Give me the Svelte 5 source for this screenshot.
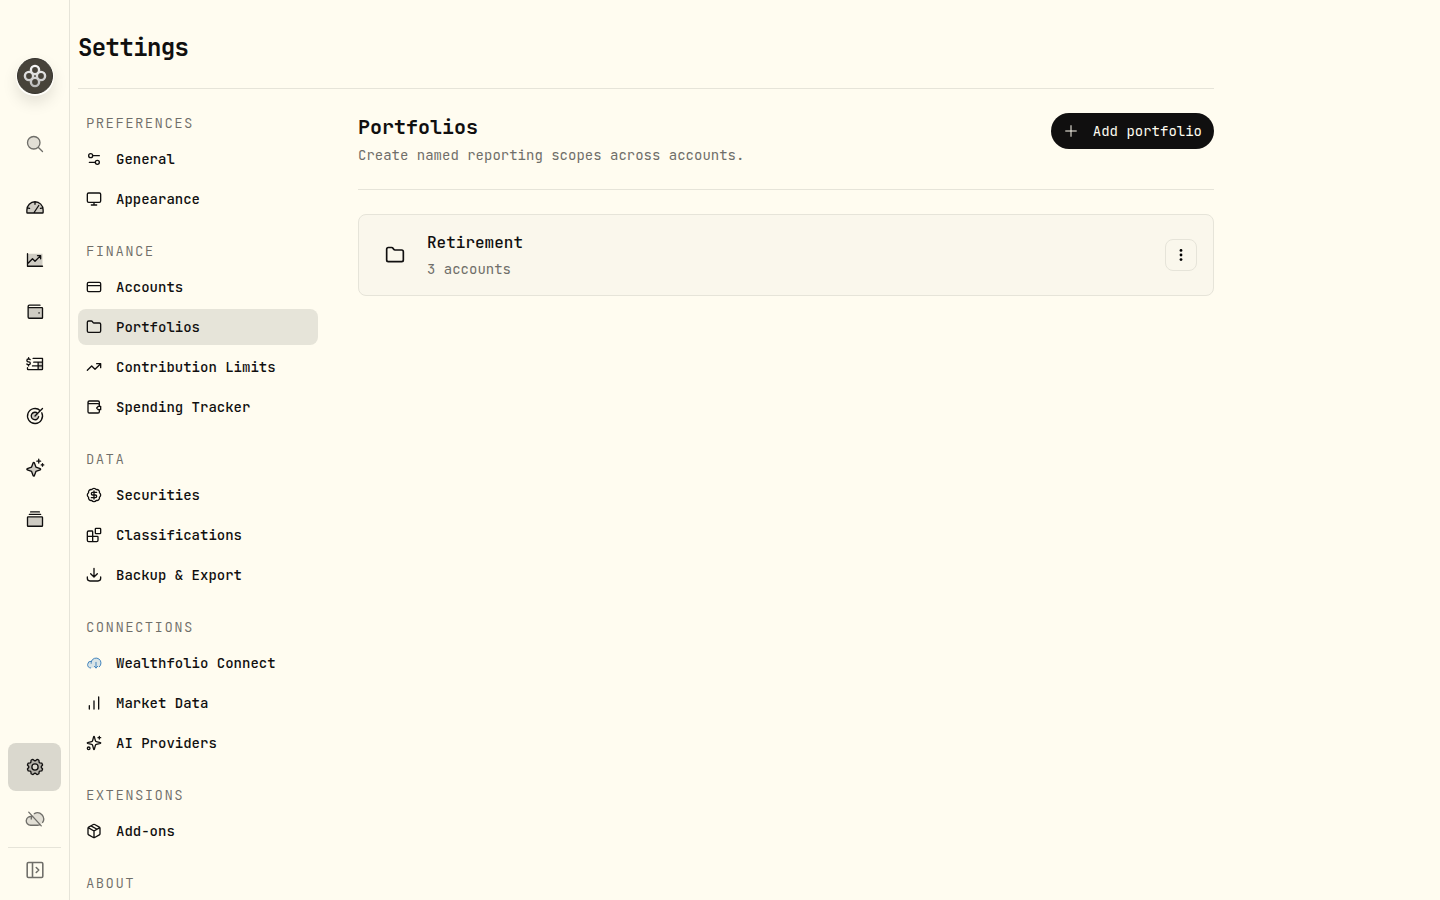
<script lang="ts">
  interface NavItem {
    label: string;
    icon: string;
  }

  interface NavGroup {
    title: string;
    items: NavItem[];
  }

  interface Portfolio {
    id: number;
    name: string;
    accounts: number;
  }

  // `fill` is the tinted layer, `line` the outline drawn over it (256 grid).
  const railIcons: Record<string, { fill?: string; line: string }> = {
    search: {
      fill: 'M192 112a80 80 0 1 1-160 0a80 80 0 1 1 160 0Z',
      line: 'M192 112a80 80 0 1 1-160 0a80 80 0 1 1 160 0ZM168.6 168.6 224 224',
    },
    dashboard: {
      fill: 'M24 192V153a104 104 0 0 1 208-1v40Z',
      line: 'M24 184V153C24 95.6 70.2 48.2 127.6 48A104 104 0 0 1 232 152v32a8 8 0 0 1-8 8H32a8 8 0 0 1-8-8ZM112 192l64-96M128 48v32M27.5 125.1l30.9 8.3M228.5 125.1l-30.9 8.3',
    },
    performance: {
      fill: 'M32 48H224V208H32Z',
      line: 'M224 208H32V48M200 72l-72 72-32-32-64 64M200 112V72H160',
    },
    accounts: {
      fill: 'M40 56a16 16 0 0 0 16 16H216a8 8 0 0 1 8 8V200a8 8 0 0 1-8 8H56a16 16 0 0 1-16-16Z',
      line: 'M40 56V192a16 16 0 0 0 16 16H216a8 8 0 0 0 8-8V80a8 8 0 0 0-8-8H56A16 16 0 0 1 40 56h0A16 16 0 0 1 56 40H192M178 140h4',
    },
    activity: {
      fill: 'M168 104h56v88h-56Z',
      line: 'M104 56H224V192a8 8 0 0 1-8 8H40a8 8 0 0 1-8-8V176M112 104H224M96 152H224M168 104v96M24 128a20 20 0 0 0 16 8h10a18 18 0 0 0 0-36h-8a18 18 0 0 1 0-36h8a20 20 0 0 1 16 8M46 64V48M46 152V136',
    },
    goals: {
      fill: 'M176 128a48 48 0 1 1-96 0a48 48 0 1 1 96 0Z',
      line: 'M128 128 224 32M195.9 60.1a96 96 0 1 0 18.8 26.5M161.9 94.1a48 48 0 1 0 13.1 43.4',
    },
    assistant: {
      fill: 'M194.8 151.4l-55.1 20.3-20.3 55.1a7.9 7.9 0 0 1-14.8 0l-20.3-55.1-55.1-20.3a7.9 7.9 0 0 1 0-14.8l55.1-20.3 20.3-55.1a7.9 7.9 0 0 1 14.8 0l20.3 55.1 55.1 20.3a7.9 7.9 0 0 1 0 14.8Z',
      line: 'M194.8 151.4l-55.1 20.3-20.3 55.1a7.9 7.9 0 0 1-14.8 0l-20.3-55.1-55.1-20.3a7.9 7.9 0 0 1 0-14.8l55.1-20.3 20.3-55.1a7.9 7.9 0 0 1 14.8 0l20.3 55.1 55.1 20.3a7.9 7.9 0 0 1 0 14.8ZM176 16v48M200 40H152M224 72v32M240 88H208',
    },
    holdings: {
      fill: 'M32 88H224V208H32Z',
      line: 'M40 88H216a8 8 0 0 1 8 8V200a8 8 0 0 1-8 8H40a8 8 0 0 1-8-8V96a8 8 0 0 1 8-8ZM56 56H200M72 24H184',
    },
    settings: {
      fill: 'M207.9 123.2l16.8-21a99.1 99.1 0 0 0-10.1-24.3l-26.7-3a81 81 0 0 0-6.8-6.8l-3-26.7a99.4 99.4 0 0 0-24.3-10l-21 16.8a81.6 81.6 0 0 0-9.6 0l-21-16.8A99.1 99.1 0 0 0 77.9 41.4l-3 26.7a81 81 0 0 0-6.8 6.8l-26.7 3a99.4 99.4 0 0 0-10 24.3l16.8 21a81.6 81.6 0 0 0 0 9.6l-16.8 21a99.1 99.1 0 0 0 10.1 24.3l26.7 3a81 81 0 0 0 6.8 6.8l3 26.7a99.4 99.4 0 0 0 24.3 10l21-16.8a81.6 81.6 0 0 0 9.6 0l21 16.8a99.1 99.1 0 0 0 24.3-10.1l3-26.7a81 81 0 0 0 6.8-6.8l26.7-3a99.4 99.4 0 0 0 10-24.3l-16.8-21A81.6 81.6 0 0 0 207.9 123.2ZM128 168a40 40 0 1 1 40-40A40 40 0 0 1 128 168Z',
      line: 'M168 128a40 40 0 1 1-80 0a40 40 0 1 1 80 0ZM207.9 123.2l16.8-21a99.1 99.1 0 0 0-10.1-24.3l-26.7-3a81 81 0 0 0-6.8-6.8l-3-26.7a99.4 99.4 0 0 0-24.3-10l-21 16.8a81.6 81.6 0 0 0-9.6 0l-21-16.8A99.1 99.1 0 0 0 77.9 41.4l-3 26.7a81 81 0 0 0-6.8 6.8l-26.7 3a99.4 99.4 0 0 0-10 24.3l16.8 21a81.6 81.6 0 0 0 0 9.6l-16.8 21a99.1 99.1 0 0 0 10.1 24.3l26.7 3a81 81 0 0 0 6.8 6.8l3 26.7a99.4 99.4 0 0 0 24.3 10l21-16.8a81.6 81.6 0 0 0 9.6 0l21 16.8a99.1 99.1 0 0 0 24.3-10.1l3-26.7a81 81 0 0 0 6.8-6.8l26.7-3a99.4 99.4 0 0 0 10-24.3l-16.8-21A81.6 81.6 0 0 0 207.9 123.2Z',
    },
    cloudOff: {
      fill: 'M160 48a80 80 0 0 0-74 50A56 56 0 1 0 72 208h88a80 80 0 0 0 0-160Z',
      line: 'M48 40 208 216M80 128a80 80 0 0 1 5.5-29.1M120 59a80 80 0 0 1 106 113M186 203a80 80 0 0 1-26 5H72A56 56 0 1 1 85.9 97.7',
    },
    expand: {
      line: 'M44 32H212a16 16 0 0 1 16 16V208a16 16 0 0 1-16 16H44a16 16 0 0 1-16-16V48a16 16 0 0 1 16-16ZM96 32V224M144 96l32 32-32 32',
    },
  };

  const icons: Record<string, string> = {
    sliders: 'M20 7h-9M14 17H5M20 17a3 3 0 1 1-6 0a3 3 0 1 1 6 0ZM10 7a3 3 0 1 1-6 0a3 3 0 1 1 6 0Z',
    monitor: 'M4 3h16a2 2 0 0 1 2 2v10a2 2 0 0 1-2 2H4a2 2 0 0 1-2-2V5a2 2 0 0 1 2-2ZM8 21h8M12 17v4',
    card: 'M4 5h16a2 2 0 0 1 2 2v10a2 2 0 0 1-2 2H4a2 2 0 0 1-2-2V7a2 2 0 0 1 2-2ZM2 10h20',
    folder: 'M20 20a2 2 0 0 0 2-2V8a2 2 0 0 0-2-2h-7.9a2 2 0 0 1-1.69-.9L9.6 3.9A2 2 0 0 0 7.93 3H4a2 2 0 0 0-2 2v13a2 2 0 0 0 2 2Z',
    trending: 'M22 7l-8.5 8.5-5-5L2 17M16 7h6v6',
    wallet: 'M20 9V5a2 2 0 0 0-2-2H5a2 2 0 0 0 0 4h13a2 2 0 0 1 2 2v1.5M3 5v14a2 2 0 0 0 2 2h13a2 2 0 0 0 2-2v-2.5M22 11h-3.5L16 13.5l2.5 2.5H22Z',
    badge: 'M3.85 8.62a4 4 0 0 1 4.78-4.77 4 4 0 0 1 6.74 0 4 4 0 0 1 4.78 4.78 4 4 0 0 1 0 6.74 4 4 0 0 1-4.77 4.78 4 4 0 0 1-6.75 0 4 4 0 0 1-4.78-4.77 4 4 0 0 1 0-6.76ZM16 8h-6a2 2 0 1 0 0 4h4a2 2 0 1 1 0 4H8M12 18V6',
    blocks: 'M15 2h6a1 1 0 0 1 1 1v6a1 1 0 0 1-1 1h-6a1 1 0 0 1-1-1V3a1 1 0 0 1 1-1ZM10 22V7a1 1 0 0 0-1-1H4a2 2 0 0 0-2 2v12a2 2 0 0 0 2 2h12a2 2 0 0 0 2-2v-5a1 1 0 0 0-1-1H2',
    download: 'M12 2v12M7 10l5 5 5-5M2 15v2a4 4 0 0 0 4 4h12a4 4 0 0 0 4-4v-2',
    bars: 'M5 21v-5M12 21V9M19 21V3',
    sparkles: 'M9.94 15.5A2 2 0 0 0 8.5 14.06l-6.14-1.58a.5.5 0 0 1 0-.96L8.5 9.94A2 2 0 0 0 9.94 8.5l1.58-6.14a.5.5 0 0 1 .96 0L14.06 8.5A2 2 0 0 0 15.5 9.94l6.14 1.58a.5.5 0 0 1 0 .96L15.5 14.06a2 2 0 0 0-1.44 1.44l-1.58 6.14a.5.5 0 0 1-.96 0ZM20 2v4M22 4h-4M6 20a2 2 0 1 1-4 0a2 2 0 1 1 4 0Z',
    package: 'M11 21.73a2 2 0 0 0 2 0l7-4A2 2 0 0 0 21 16V8a2 2 0 0 0-1-1.73l-7-4a2 2 0 0 0-2 0l-7 4A2 2 0 0 0 3 8v8a2 2 0 0 0 1 1.73ZM12 22V12M3.3 7l8.7 5 8.7-5M7.5 4.27l9 5.15',
    plus: 'M4 12h16M12 4v16',
  };

  const railItems: NavItem[] = [
    { label: 'Dashboard', icon: 'dashboard' },
    { label: 'Performance', icon: 'performance' },
    { label: 'Accounts', icon: 'accounts' },
    { label: 'Activities', icon: 'activity' },
    { label: 'Goals', icon: 'goals' },
    { label: 'Assistant', icon: 'assistant' },
    { label: 'Holdings', icon: 'holdings' },
  ];

  const groups: NavGroup[] = [
    {
      title: 'Preferences',
      items: [
        { label: 'General', icon: 'sliders' },
        { label: 'Appearance', icon: 'monitor' },
      ],
    },
    {
      title: 'Finance',
      items: [
        { label: 'Accounts', icon: 'card' },
        { label: 'Portfolios', icon: 'folder' },
        { label: 'Contribution Limits', icon: 'trending' },
        { label: 'Spending Tracker', icon: 'wallet' },
      ],
    },
    {
      title: 'Data',
      items: [
        { label: 'Securities', icon: 'badge' },
        { label: 'Classifications', icon: 'blocks' },
        { label: 'Backup & Export', icon: 'download' },
      ],
    },
    {
      title: 'Connections',
      items: [
        { label: 'Wealthfolio Connect', icon: 'cloud' },
        { label: 'Market Data', icon: 'bars' },
        { label: 'AI Providers', icon: 'sparkles' },
      ],
    },
    { title: 'Extensions', items: [{ label: 'Add-ons', icon: 'package' }] },
    { title: 'About', items: [] },
  ];

  const portfolios: Portfolio[] = [{ id: 1, name: 'Retirement', accounts: 3 }];

  let current = $state('Portfolios');

  function select(e: MouseEvent, label: string) {
    e.preventDefault();
    current = label;
  }
</script>

{#snippet railIcon(name: string)}
  <svg class="rail-icon" viewBox="0 0 256 256" aria-hidden="true">
    {#if railIcons[name].fill}
      <path class="tint" d={railIcons[name].fill} />
    {/if}
    <path class="outline" d={railIcons[name].line} />
  </svg>
{/snippet}

{#snippet icon(name: string)}
  {#if name === 'cloud'}
    <svg class="icon cloud" viewBox="0 0 24 24" aria-hidden="true">
      <path class="cloud-body" d="M7 19.5A5 5 0 1 1 8.1 9.4A7.5 7.5 0 1 1 20 17.8" />
      <path d="M7.7 12.5a7 7 0 0 1 .6-3.2M15 11v8.5M12.5 17l2.5 2.5 2.5-2.5" />
    </svg>
  {:else}
    <svg class="icon" viewBox="0 0 24 24" aria-hidden="true"><path d={icons[name]} /></svg>
  {/if}
{/snippet}

<div class="shell">
  <aside class="rail">
    <a class="logo" href="#home" aria-label="Home">
      <svg viewBox="0 0 36 36" aria-hidden="true">
        <defs>
          <linearGradient id="petal" x1="0" y1="7" x2="0" y2="29" gradientUnits="userSpaceOnUse">
            <stop offset="0" stop-color="#fafafa" />
            <stop offset="1" stop-color="#b8b8b8" />
          </linearGradient>
        </defs>
        <circle cx="18" cy="18" r="17.5" fill="#47433a" stroke="#35332e" />
        <g fill="none" stroke="url(#petal)" stroke-width="2.4">
          <circle cx="18" cy="12" r="4.1" />
          <circle cx="12" cy="18" r="4.1" />
          <circle cx="24" cy="18" r="4.1" />
          <circle cx="18" cy="24" r="4.1" />
        </g>
      </svg>
    </a>
    <button type="button" class="rail-item muted search" aria-label="Search">{@render railIcon('search')}</button>

    <nav class="rail-nav" aria-label="Main">
      {#each railItems as item (item.label)}
        <a class="rail-item" href="#{item.icon}" aria-label={item.label}>{@render railIcon(item.icon)}</a>
      {/each}
    </nav>

    <div class="rail-nav bottom">
      <a class="rail-item active" href="#settings" aria-label="Settings">{@render railIcon('settings')}</a>
      <button type="button" class="rail-item muted" aria-label="Sync is off">{@render railIcon('cloudOff')}</button>
    </div>
    <div class="rail-toggle">
      <button type="button" class="rail-item muted" aria-label="Expand sidebar">{@render railIcon('expand')}</button>
    </div>
  </aside>

  <main class="page">
    <header class="page-header">
      <h1>Settings</h1>
    </header>

    <div class="columns">
      <nav class="settings-nav" aria-label="Settings sections">
        {#each groups as group (group.title)}
          <section>
            <h2 class="group-title">{group.title}</h2>
            {#if group.items.length > 0}
              <ul>
                {#each group.items as item (item.label)}
                  <li>
                    <a
                      href="#{item.icon}"
                      class="nav-link"
                      class:active={item.label === current}
                      aria-current={item.label === current ? 'page' : undefined}
                      onclick={(e) => select(e, item.label)}
                    >
                      {@render icon(item.icon)}
                      <span>{item.label}</span>
                    </a>
                  </li>
                {/each}
              </ul>
            {/if}
          </section>
        {/each}
      </nav>

      <div class="content">
        <div class="content-header">
          <div>
            <h2>Portfolios</h2>
            <p>Create named reporting scopes across accounts.</p>
          </div>
          <button type="button" class="add-button">
            {@render icon('plus')}
            <span>Add portfolio</span>
          </button>
        </div>

        {#each portfolios as portfolio (portfolio.id)}
          <article class="card">
            <div class="card-icon">{@render icon('folder')}</div>
            <div class="card-text">
              <h3>{portfolio.name}</h3>
              <p>{portfolio.accounts} accounts</p>
            </div>
            <button type="button" class="menu-button" aria-label="Open menu for {portfolio.name}">
              <svg viewBox="0 0 16 16" width="16" height="16" aria-hidden="true">
                <circle cx="8" cy="3.4" r="1.4" />
                <circle cx="8" cy="8" r="1.4" />
                <circle cx="8" cy="12.6" r="1.4" />
              </svg>
            </button>
          </article>
        {/each}
      </div>
    </div>
  </main>
</div>

<style>
  :global(body) {
    background: #fffcf0;
  }

  .shell {
    --text: #100f0f;
    --muted: #6f6e69;
    --border: #e6e4d9;
    --card: #faf7ec;
    display: flex;
    min-height: 100vh;
    background: #fffcf0;
    color: var(--text);
    font-family: 'JetBrains Mono', 'DejaVu Sans Mono', 'Liberation Mono', monospace;
    font-size: 14px;
    line-height: 20px;
  }

  h1, h2, h3, p, ul { margin: 0; padding: 0; }
  ul { list-style: none; }
  a { color: inherit; text-decoration: none; }
  button {
    border: 0;
    background: none;
    color: inherit;
    font: inherit;
    cursor: pointer;
  }

  .rail {
    position: sticky;
    top: 0;
    display: flex;
    flex-direction: column;
    flex-shrink: 0;
    box-sizing: border-box;
    width: 70px;
    height: 100vh;
    padding: 58px 8px 8px;
    border-right: 1px solid var(--border);
  }
  .logo {
    align-self: center;
    width: 36px;
    height: 36px;
    border-radius: 50%;
    box-shadow: 0 1px 0 1px #fffefa, 0 8px 16px rgba(16, 15, 15, 0.12);
  }
  .logo svg { display: block; }
  .rail-item {
    display: flex;
    align-items: center;
    justify-content: center;
    width: 100%;
    height: 48px;
    padding: 0;
    border-radius: 8px;
  }
  .rail-item:hover { background: var(--border); }
  .rail-item.active { background: #dad8ce; }
  .rail-item.muted { color: var(--muted); }
  .rail-item.search { margin: 26px 0 16px; }
  .rail-nav {
    display: flex;
    flex-direction: column;
    gap: 4px;
  }
  .rail-nav.bottom {
    margin-top: auto;
    padding-bottom: 4px;
  }
  .rail-toggle { border-top: 1px solid var(--border); }
  .rail-toggle .rail-item { height: 44px; }
  .rail-toggle .outline { stroke-width: 20; }

  .rail-icon {
    width: 20px;
    height: 20px;
  }
  .tint {
    fill: currentColor;
    opacity: 0.2;
  }
  .outline {
    fill: none;
    stroke: currentColor;
    stroke-width: 17;
    stroke-linecap: round;
    stroke-linejoin: round;
  }

  .page {
    flex: 1;
    min-width: 0;
    max-width: 1136px;
    padding: 0 8px;
  }
  .page-header {
    padding: 32px 0 24px;
    border-bottom: 1px solid var(--border);
  }
  h1 {
    font-size: 24px;
    font-weight: 700;
    line-height: 32px;
    letter-spacing: -0.025em;
  }

  .columns {
    display: flex;
    gap: 40px;
    padding-top: 24px;
  }
  .settings-nav {
    display: flex;
    flex-direction: column;
    flex: 0 0 240px;
    gap: 24px;
  }
  .group-title {
    padding: 0 8px;
    color: var(--muted);
    font-size: 14px;
    font-weight: 300;
    letter-spacing: 0.1em;
    text-transform: uppercase;
  }
  .settings-nav ul {
    display: flex;
    flex-direction: column;
    gap: 4px;
    margin-top: 8px;
  }
  .nav-link {
    display: flex;
    align-items: center;
    gap: 14px;
    height: 36px;
    padding: 0 8px;
    border-radius: 8px;
    font-weight: 500;
    white-space: nowrap;
  }
  .nav-link:hover,
  .nav-link.active { background: var(--border); }

  .icon {
    flex-shrink: 0;
    width: 16px;
    height: 16px;
    fill: none;
    stroke: currentColor;
    stroke-width: 2;
    stroke-linecap: round;
    stroke-linejoin: round;
  }
  .cloud {
    color: #4385be;
    stroke-width: 1.5;
  }
  .cloud-body { fill: rgba(67, 133, 190, 0.2); }

  .content {
    flex: 1;
    min-width: 0;
  }
  .content-header {
    display: flex;
    align-items: flex-start;
    justify-content: space-between;
    gap: 16px;
    margin-bottom: 24px;
    padding-bottom: 24px;
    border-bottom: 1px solid var(--border);
  }
  .content-header h2 {
    font-size: 20px;
    font-weight: 600;
    line-height: 28px;
  }
  .content-header p,
  .card-text p {
    margin-top: 4px;
    color: var(--muted);
  }
  .add-button {
    display: flex;
    align-items: center;
    flex-shrink: 0;
    gap: 14px;
    height: 36px;
    padding: 0 12px;
    border-radius: 18px;
    background: var(--text);
    color: #fffcf0;
    font-weight: 400;
  }
  .add-button .icon { stroke-width: 1.5; }

  .card {
    display: flex;
    align-items: center;
    gap: 12px;
    padding: 16px;
    border: 1px solid var(--border);
    border-radius: 8px;
    background: var(--card);
  }
  .card-icon {
    display: grid;
    place-items: center;
    width: 40px;
    height: 40px;
  }
  .card-icon .icon {
    width: 20px;
    height: 20px;
  }
  .card-text {
    flex: 1;
    min-width: 0;
  }
  h3 {
    font-size: 16px;
    font-weight: 500;
    line-height: 24px;
  }
  .menu-button {
    display: grid;
    place-items: center;
    width: 32px;
    height: 32px;
    padding: 0;
    border: 1px solid var(--border);
    border-radius: 8px;
  }
</style>
